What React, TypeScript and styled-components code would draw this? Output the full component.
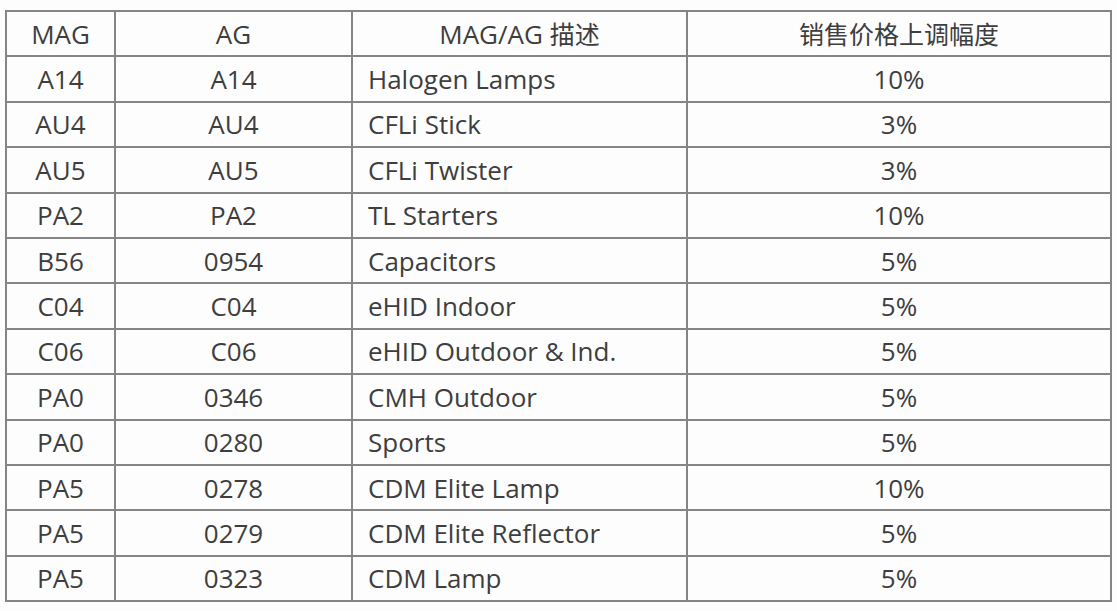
import React from 'react';
import styled, { createGlobalStyle } from 'styled-components';

const GlobalStyle = createGlobalStyle`
  html, body {
    margin: 0;
    padding: 0;
    background: #ffffff;
  }
  body {
    font-family: "Open Sans", "Noto Sans CJK SC", sans-serif;
    color: #3c3c3c;
  }
`;

const Page = styled.div`
  width: 1117px;
  height: 611px;
  padding: 10px 0 0 5px;
  box-sizing: border-box;
  background: #fdfdfd;
`;

const Table = styled.table`
  border-collapse: collapse;
  table-layout: fixed;
  width: 1105px;
  border: 2px solid #7d7d7d;
`;

const Cell = styled.td<{ $align?: 'left' | 'center' }>`
  height: 45.4px;
  padding: 0 0 0 ${(p) => (p.$align === 'left' ? '15px' : '0')};
  border: 2px solid #858585;
  text-align: ${(p) => p.$align ?? 'center'};
  vertical-align: middle;
  font-size: 26px;
  line-height: 1;
  color: #3e3e3e;
  white-space: nowrap;
  box-sizing: border-box;
`;

const HeadCell = styled(Cell).attrs({ as: 'th' })`
  font-weight: 400;
  text-align: center;
`;

const HeadCjk = styled.span`
  font-size: 25px;
`;

const rows: [string, string, string, string][] = [
  ['A14', 'A14', 'Halogen Lamps', '10%'],
  ['AU4', 'AU4', 'CFLi Stick', '3%'],
  ['AU5', 'AU5', 'CFLi Twister', '3%'],
  ['PA2', 'PA2', 'TL Starters', '10%'],
  ['B56', '0954', 'Capacitors', '5%'],
  ['C04', 'C04', 'eHID Indoor', '5%'],
  ['C06', 'C06', 'eHID Outdoor & Ind.', '5%'],
  ['PA0', '0346', 'CMH Outdoor', '5%'],
  ['PA0', '0280', 'Sports', '5%'],
  ['PA5', '0278', 'CDM Elite Lamp', '10%'],
  ['PA5', '0279', 'CDM Elite Reflector', '5%'],
  ['PA5', '0323', 'CDM Lamp', '5%'],
];

export default function App() {
  return (
    <>
      <GlobalStyle />
      <Page>
        <Table>
          <colgroup>
            <col style={{ width: 109 }} />
            <col style={{ width: 237 }} />
            <col style={{ width: 335 }} />
            <col style={{ width: 424 }} />
          </colgroup>
          <thead>
            <tr>
              <HeadCell>MAG</HeadCell>
              <HeadCell>AG</HeadCell>
              <HeadCell>
                MAG/AG <HeadCjk>描述</HeadCjk>
              </HeadCell>
              <HeadCell>
                <HeadCjk>销售价格上调幅度</HeadCjk>
              </HeadCell>
            </tr>
          </thead>
          <tbody>
            {rows.map((r, i) => (
              <tr key={i}>
                <Cell>{r[0]}</Cell>
                <Cell>{r[1]}</Cell>
                <Cell $align="left">{r[2]}</Cell>
                <Cell>{r[3]}</Cell>
              </tr>
            ))}
          </tbody>
        </Table>
      </Page>
    </>
  );
}
